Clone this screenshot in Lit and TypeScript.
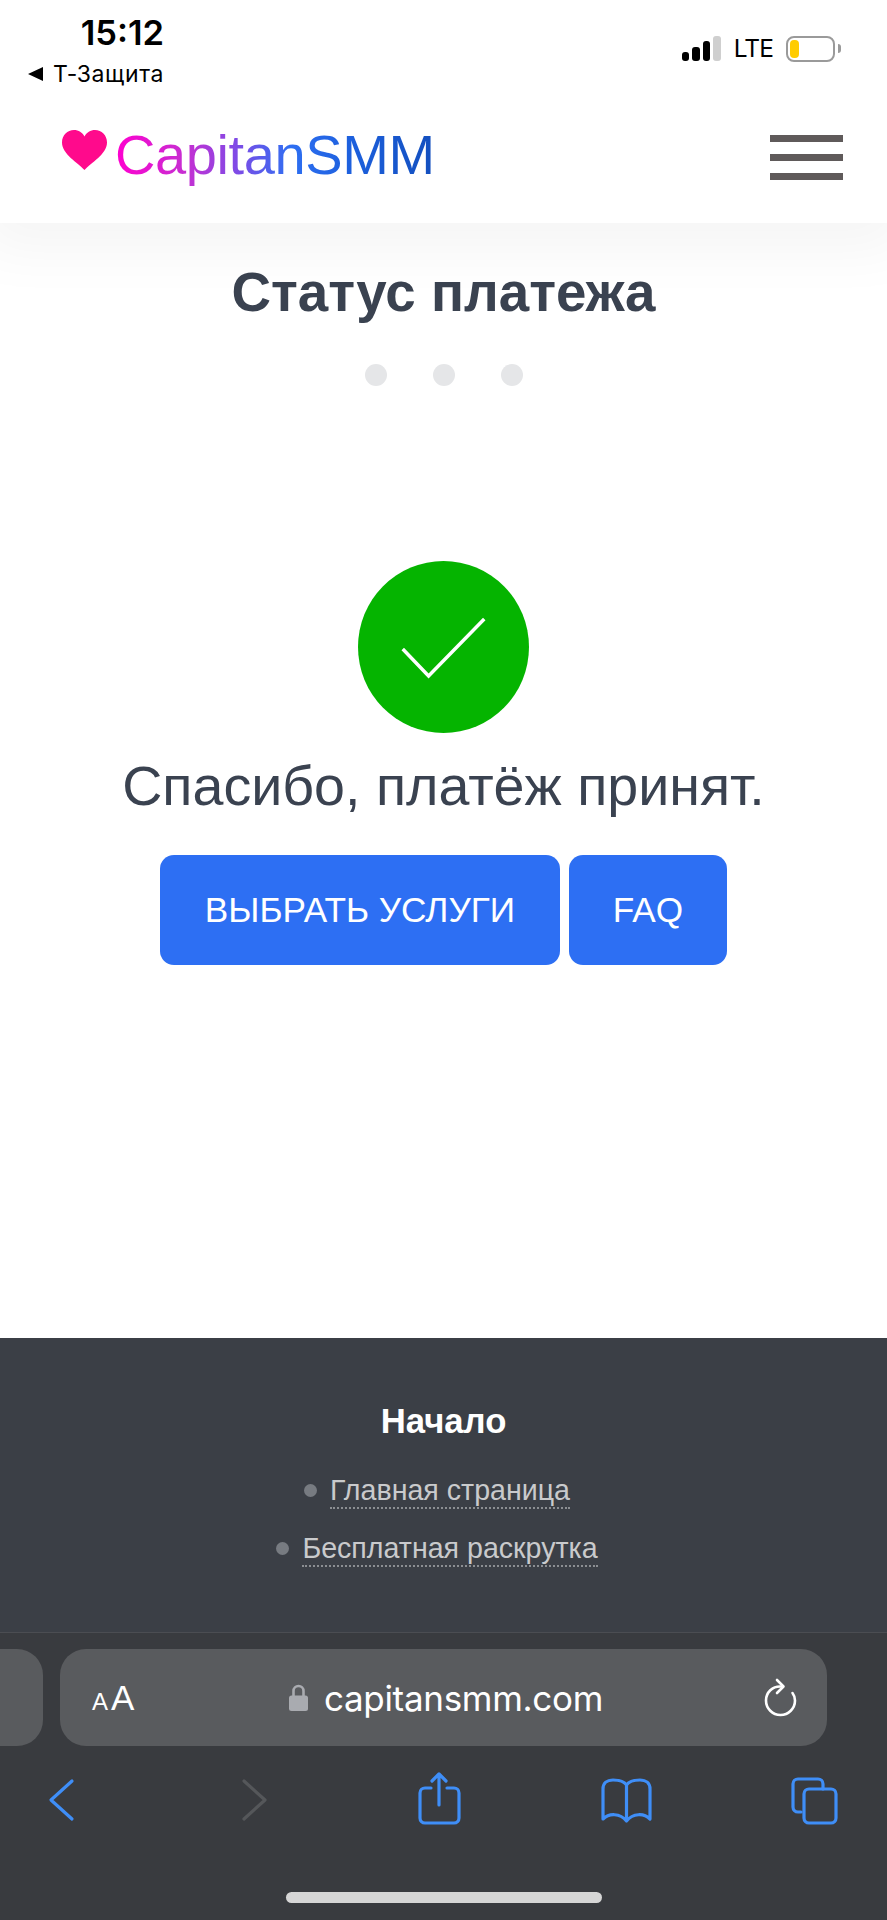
import { LitElement, html, css } from "lit";
import { customElement } from "lit/decorators.js";

@customElement("app-root")
export class AppRoot extends LitElement {
  static styles = css`
    :host { display: block; width: 887px; height: 1920px; overflow: hidden; background: #fff; font-family: "Liberation Sans", Arial, sans-serif; }
    .top { height: 223px; background: #fff; position: relative; z-index: 1; box-shadow: 0 6px 56px 20px rgba(0,0,0,.042); display: flex; flex-direction: column; }
    .status { height: 92px; display: flex; justify-content: space-between; font-family: Inter, sans-serif; color: #000; }
    .carrier { padding: 13px 0 0 27px; display: flex; flex-direction: column; align-items: flex-end; width: 137px; }
    .time { font-size: 34.5px; font-weight: 600; line-height: 40px; }
    .back-app { font-size: 23px; line-height: 26px; display: flex; align-items: center; gap: 10px; margin-top: 8px; letter-spacing: .6px; }
    .tri { width: 0; height: 0; border-style: solid; border-width: 7px 15px 7px 0; border-color: transparent #000 transparent transparent; }
    .indicators { display: flex; align-items: center; padding: 35px 46px 0 0; height: 27px; }
    .bars { display: flex; align-items: flex-end; gap: 3px; height: 25px; }
    .bar { width: 7.5px; background: #000; border-radius: 3px; }
    .bar.h1 { height: 9px; } .bar.h2 { height: 14px; } .bar.h3 { height: 20px; } .bar.h4 { height: 25px; background: #cfcfcf; }
    .lte { font-size: 24.5px; margin-left: 13px; line-height: 27px; font-weight: 400; font-family: Inter, sans-serif; letter-spacing: -.9px; }
    .battery { width: 49px; height: 26px; box-sizing: border-box; border: 2.5px solid #9a9a9a; border-radius: 8px; margin-left: 13px; padding: 2px; }
    .charge { width: 9px; height: 100%; background: #ffcc00; border-radius: 4px; }
    .nub { width: 3px; height: 9px; background: #9a9a9a; border-radius: 0 3px 3px 0; margin-left: 3px; }
    .nav { flex: 1; display: flex; align-items: flex-start; justify-content: space-between; padding: 0 44px 0 62px; }
    .brand { display: flex; align-items: flex-start; gap: 8px; padding-top: 30px; }
    .heart { width: 45px; height: 40px; margin-top: 8px; }
    .logo { font-size: 56px; line-height: 64px; margin-top: 1px; letter-spacing: -.4px; background: linear-gradient(90deg, #ff00cf 0%, #c62fd2 22%, #7f4be6 38%, #2e6ff2 55%, #1c5fdc 75%, #134fbe 100%); -webkit-background-clip: text; background-clip: text; color: transparent; }
    .burger { display: flex; flex-direction: column; gap: 12px; width: 73px; padding-top: 43px; }
    .burger i { display: block; height: 7px; background: #5f5a5a; }
    main { height: 1115px; display: flex; flex-direction: column; align-items: center; color: #3a4250; box-sizing: border-box; padding-top: 36px; }
    h1 { margin: 0; font-size: 54.7px; line-height: 66px; font-weight: 700; }
    .dots { display: flex; gap: 46px; margin-top: 39px; }
    .dots i { width: 22px; height: 22px; border-radius: 50%; background: #e5e6e8; display: block; }
    .ok { width: 171px; height: 172px; margin-top: 175px; }
    .thanks { font-size: 55.6px; line-height: 66px; margin-top: 20px; }
    .btns { display: flex; gap: 9px; margin-top: 36px; }
    .btn { height: 110px; box-sizing: border-box; border-radius: 14px; background: #2d6ff3; color: #fff; font-size: 35.2px; display: flex; align-items: center; justify-content: center; }
    .btn.a { width: 400px; } .btn.b { width: 158px; }
    footer { height: 294px; background: #3b3f46; box-sizing: border-box; padding-top: 64px; display: flex; flex-direction: column; align-items: center; }
    .ft { font-size: 34.7px; font-weight: 700; color: #fff; line-height: 38px; }
    .link { display: flex; align-items: center; gap: 13px; font-size: 28.6px; color: #c9cacc; margin-top: 19px; height: 39px; padding-right: 13px; }
    .ft + .link { margin-top: 31px; }
    .link i { width: 13px; height: 13px; border-radius: 50%; background: #777b81; display: block; }
    .link span { border-bottom: 2px dotted #8b8e92; line-height: 34px; }
    .safari { height: 288px; background: #393b3f; border-top: 1px solid #4b4d52; box-sizing: border-box; padding-top: 16px; display: flex; flex-direction: column; font-family: Inter, sans-serif; }
    .urlrow { display: flex; gap: 17px; height: 97px; }
    .stub { width: 43px; background: #595b5e; border-radius: 0 26px 26px 0; }
    .url { width: 767px; background: #595b5e; border-radius: 26px; display: flex; align-items: center; justify-content: space-between; box-sizing: border-box; padding: 0 29px 0 32px; color: #fff; }
    .aa { display: flex; align-items: baseline; gap: 3px; font-family: "Liberation Sans", sans-serif; width: 44px; line-height: 1; }
    .aa .s { font-size: 24px; } .aa .l { font-size: 35px; }
    .addr { display: flex; align-items: center; gap: 16px; font-size: 35px; letter-spacing: -.3px; font-weight: 400; margin-right: 6px; }
    .tools { display: grid; grid-template-columns: 193px 185px 187px 188px 52px; padding: 26px 0 0 35px; }
    .tools svg { display: block; width: 52px; height: 56px; fill: none; stroke: #3f8ef7; stroke-width: 3.2; stroke-linecap: round; stroke-linejoin: round; }
    .tools svg.off { stroke: #55575a; }
    .homewrap { display: flex; justify-content: center; margin-top: 64px; }
    .home { width: 316px; height: 11px; background: #d6d6d6; border-radius: 6px; }
  `;

  render() {
    return html`
      <div class="top">
        <div class="status">
          <div class="carrier">
            <div class="time">15:12</div>
            <div class="back-app"><span class="tri"></span>Т-Защита</div>
          </div>
          <div class="indicators">
            <div class="bars"><span class="bar h1"></span><span class="bar h2"></span><span class="bar h3"></span><span class="bar h4"></span></div>
            <span class="lte">LTE</span>
            <div class="battery"><div class="charge"></div></div>
            <span class="nub"></span>
          </div>
        </div>
        <div class="nav">
          <div class="brand">
            <svg class="heart" viewBox="0 0 45 40"><path fill="#ff0a8c" d="M22.5 40C16 33 0 24 0 12.500 0 5 5.500 0 12 0 16.500 0 20.500 2.500 22.500 6.500 24.500 2.500 28.500 0 33 0 39.500 0 45 5 45 12.500 45 24 29 33 22.500 40Z"/></svg>
            <span class="logo">CapitanSMM</span>
          </div>
          <div class="burger"><i></i><i></i><i></i></div>
        </div>
      </div>
      <main>
        <h1>Статус платежа</h1>
        <div class="dots"><i></i><i></i><i></i></div>
        <svg class="ok" viewBox="0 0 172 172" preserveAspectRatio="none">
          <circle cx="86" cy="86" r="86" fill="#05b400"/>
          <path d="M45 88 L71 115 L127 58" fill="none" stroke="#fff" stroke-width="3.500"/>
        </svg>
        <div class="thanks">Спасибо, платёж принят.</div>
        <div class="btns">
          <div class="btn a">ВЫБРАТЬ УСЛУГИ</div>
          <div class="btn b">FAQ</div>
        </div>
      </main>
      <footer>
        <div class="ft">Начало</div>
        <div class="link"><i></i><span>Главная страница</span></div>
        <div class="link"><i></i><span>Бесплатная раскрутка</span></div>
      </footer>
      <div class="safari">
        <div class="urlrow">
          <div class="stub"></div>
          <div class="url">
            <div class="aa"><span class="s">A</span><span class="l">A</span></div>
            <div class="addr">
              <svg width="19" height="27" viewBox="0 0 19 27"><path d="M4.500 13V7a5 5 0 0 1 10 0v6" fill="none" stroke="#a9abb0" stroke-width="2.600"/><rect x="0" y="11.500" width="19" height="15.500" rx="2.500" fill="#a9abb0"/></svg>
              <span>capitansmm.com</span>
            </div>
            <svg width="36" height="40" viewBox="0 0 36 40" fill="none" stroke="#fff" stroke-width="2.600" stroke-linecap="round" stroke-linejoin="round"><path d="M19 8.500C10.500 8 4 14.500 4 22.500 4 30.500 10.500 37 18.500 37 26.500 37 33 30.500 33 22.500 33 19.500 32 17 30.500 15"/><path d="M15 2 L21.500 8.500 L15 15"/></svg>
          </div>
        </div>
        <div class="tools">
          <svg viewBox="0 0 52 56"><path d="M37 9 L16 28 L37 47"/></svg>
          <svg class="off" viewBox="0 0 52 56"><path d="M16 9 L37 28 L16 47"/></svg>
          <svg viewBox="0 0 52 56"><path d="M18 16H12a5 5 0 0 0-5 5V46a5 5 0 0 0 5 5H41a5 5 0 0 0 5-5V21a5 5 0 0 0-5-5H34"/><path d="M26 33V2M19 9L26 2L33 9"/></svg>
          <svg viewBox="0 0 52 56"><path d="M26.500 13C24 9 19 8 13 8 7 8 3 11 3 17V47C9 41 20 41 26.500 49 33 41 44 41 50 47V17C50 11 46 8 40 8 34 8 29 9 26.500 13ZM26.500 13V49"/></svg>
          <svg viewBox="0 0 52 56"><path d="M13 40H10a5 5 0 0 1-5-5V12a5 5 0 0 1 5-5H30a5 5 0 0 1 5 5V17"/><rect x="16" y="17" width="32" height="34" rx="5"/></svg>
        </div>
        <div class="homewrap"><div class="home"></div></div>
      </div>
    `;
  }
}
